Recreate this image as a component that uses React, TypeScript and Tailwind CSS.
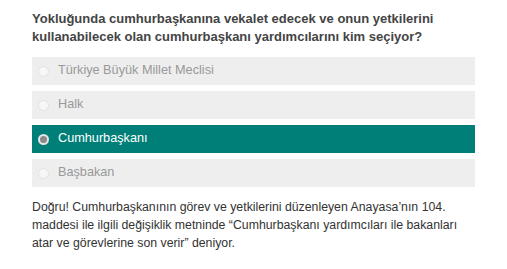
const options = ["Türkiye Büyük Millet Meclisi", "Halk", "Cumhurbaşkanı", "Başbakan"];
const selected = 2;

function Radio({ checked }: { checked: boolean }) {
	if (checked) {
		return (
			<span className="flex h-[11px] w-[11px] items-center justify-center rounded-full bg-[#e6e6e6]">
				<span className="h-[7px] w-[7px] rounded-full bg-[#8a8a8a]" />
			</span>
		);
	}
	return <span className="h-[11px] w-[11px] rounded-full border border-[#e2e2e2] bg-[#f7f7f7]" />;
}

export default function App() {
	return (
		<div className="w-[507px] bg-white px-8 pt-[10px] font-['Liberation_Sans',Arial,sans-serif]">
			<h2 className="text-[13px] font-bold leading-[18px] text-[#444]">
				Yokluğunda cumhurbaşkanına vekalet edecek ve onun yetkilerini kullanabilecek olan cumhurbaşkanı
				yardımcılarını kim seçiyor?
			</h2>
			<div className="mt-[11px] flex flex-col gap-[6px]">
				{options.map((o, i) => (
					<div
						key={o}
						className={`flex h-[28px] items-center gap-[9px] pl-[6px] text-[12.7px] ${
							i === selected ? "bg-[#007f79] text-white" : "bg-[#eeeeee] text-[#999]"
						}`}
					>
						<Radio checked={i === selected} />
						<span>{o}</span>
					</div>
				))}
			</div>
			<p className="mt-[11px] max-w-[440px] text-[12.3px] leading-[18px] text-[#333]">
				Doğru! Cumhurbaşkanının görev ve yetkilerini düzenleyen Anayasa’nın 104. maddesi ile ilgili
				değişiklik metninde “Cumhurbaşkanı yardımcıları ile bakanları atar ve görevlerine son verir” deniyor.
			</p>
		</div>
	);
}
